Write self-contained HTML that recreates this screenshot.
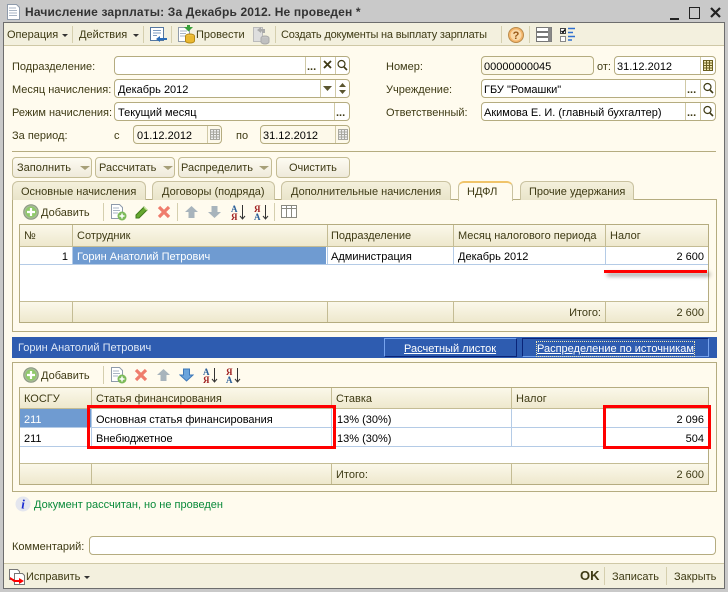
<!DOCTYPE html>
<html><head><meta charset="utf-8">
<style>
html,body{margin:0;padding:0}
body{width:728px;height:592px;position:relative;overflow:hidden;background:#fffbee;font:11px "Liberation Sans",sans-serif;color:#3e3a14}
div,span.t,svg{position:absolute}
.t{white-space:nowrap;line-height:14px;height:14px;margin-top:1px}
.k{color:#000}
.f{background:#fff;border:1px solid #b5ac80;border-radius:4px;box-sizing:border-box;height:19px}
.d{background:#fdf9ea}
.s{width:1px;top:0;bottom:0;background:#d0c9a6}
.b{box-sizing:border-box;height:21px;top:157px;border:1px solid #c4bc94;border-radius:4px;background:linear-gradient(#fdfbf2,#efeada)}
.tab{box-sizing:border-box;height:19px;top:181px;border:1px solid #c9c2a0;border-bottom:0;border-radius:6px 6px 0 0;background:linear-gradient(#f4f0dc,#e9e4ca)}
.p{box-sizing:border-box;left:12px;width:705px;border:1px solid #b5ac80}
.tb{left:19px;width:690px;box-sizing:border-box;border:1px solid #b5ac80;background:#fff}
.h{background:linear-gradient(#fbf8ea,#eee8cd)}
.v{width:1px;background:#c4bc94}
.sep{width:1px;background:#d5cfae}
.dd{width:0;height:0;border-left:3px solid transparent;border-right:3px solid transparent;border-top:3px solid #333}
.dg{width:0;height:0;border-left:5px solid transparent;border-right:5px solid transparent;border-top:4px solid #a69f78}
.r{border:3px solid #f00;box-sizing:border-box}
</style></head><body>
<!-- window frame -->
<div style="left:0;top:0;width:728px;height:22px;background:#c9c9c9"></div>
<div style="left:0;top:22px;width:3px;height:570px;background:#c9c9c9"></div>
<div style="left:725px;top:22px;width:3px;height:570px;background:#c9c9c9"></div>
<div style="left:3px;top:22px;width:1px;height:566px;background:#6d6d6d"></div>
<div style="left:724px;top:22px;width:1px;height:566px;background:#6d6d6d"></div>
<div style="left:0;top:588px;width:728px;height:4px;background:#c9c9c9"></div>
<div style="left:3px;top:588px;width:722px;height:1px;background:#6d6d6d"></div>
<div style="left:3px;top:22px;width:722px;height:1px;background:#6d6d6d"></div>
<svg style="left:6px;top:4px" width="15" height="17"><path d="M1.500 .5h9l3 3v12h-12z" fill="#fff" stroke="#8f9bab"/><path d="M3 4h7M3 6.500h8M3 9h8M3 11.500h8" stroke="#a9b5c4"/></svg>
<span class="t" style="left:25px;top:4px;font-size:12px;font-weight:bold;color:#333;letter-spacing:.15px">Начисление зарплаты: За Декабрь 2012. Не проведен *</span>
<div style="left:670px;top:18px;width:9px;height:2px;background:#222"></div>
<div style="left:689px;top:7px;width:9px;height:10px;border:1px solid #222"></div>
<svg style="left:710px;top:7px" width="11" height="11"><path d="M1 1l9 9M10 1l-9 9" stroke="#222" stroke-width="2.200"/></svg>

<!-- toolbar -->
<div style="left:4px;top:23px;width:720px;height:23px;background:#f3f0de;border-bottom:1px solid #cfc8a6;box-sizing:border-box"></div>
<span class="t" style="left:7px;top:27px">Операция</span><div class="dd" style="left:62px;top:34px"></div>
<div class="sep" style="left:72px;top:26px;height:17px"></div>
<span class="t" style="left:79px;top:27px">Действия</span><div class="dd" style="left:133px;top:34px"></div>
<div class="sep" style="left:143px;top:26px;height:17px"></div>
<svg style="left:149px;top:26px" width="19" height="18"><rect x="1.500" y="1.500" width="13" height="13" fill="#fff" stroke="#5577a0"/><path d="M4 4.500h8M4 7h8M4 9.500h4" stroke="#7f9cc0"/><path d="M7 13l4-3v2h7v2h-7v2z" fill="#2a6cb8"/></svg>
<div class="sep" style="left:171px;top:26px;height:17px"></div>
<svg style="left:177px;top:25px" width="18" height="20"><path d="M1.500 2.500h9l2 2v12h-11z" fill="#fff" stroke="#8f9bab"/><path d="M3 6h7M3 8.500h6M3 11h5" stroke="#a9b5c4"/><path d="M10 0h3v2h3l-4.500 4.500L7 2h3z" fill="#3aa03a"/><ellipse cx="13" cy="11" rx="4.500" ry="2" fill="#f0c040" stroke="#b58a18"/><path d="M8.500 11v5c0 1.200 2 2 4.500 2s4.500-.8 4.500-2v-5" fill="#eab830" stroke="#b58a18"/></svg>
<span class="t" style="left:196px;top:27px">Провести</span>
<svg style="left:252px;top:25px" width="18" height="20"><path d="M1.500 2.500h9v14h-9z" fill="#dedede" stroke="#bbb"/><path d="M5 5l4-3v2h4v4h-3V6.500H9V8z" fill="#aaa"/><ellipse cx="13" cy="13" rx="4" ry="2" fill="#c6c6c6" stroke="#aaa"/><path d="M9 13v4c0 1 2 2 4 2s4-1 4-2v-4" fill="#c0c0c0" stroke="#aaa"/></svg>
<div class="sep" style="left:275px;top:26px;height:17px"></div>
<span class="t" style="left:281px;top:27px;letter-spacing:-.19px">Создать документы на выплату зарплаты</span>
<div class="sep" style="left:501px;top:26px;height:17px"></div>
<svg style="left:507px;top:26px" width="18" height="18"><circle cx="9" cy="9" r="7.500" fill="#f3b469" stroke="#b98a4a"/><circle cx="9" cy="9" r="5.500" fill="#fad9a6"/><text x="9" y="13" text-anchor="middle" font-family="Liberation Sans" font-weight="bold" font-size="11" fill="#9a5a18">?</text></svg>
<div class="sep" style="left:529px;top:26px;height:17px"></div>
<svg style="left:536px;top:26px" width="17" height="17"><g fill="#fff" stroke="#777"><rect x=".5" y="1.500" width="15" height="4"/><rect x=".5" y="6.500" width="15" height="4"/><rect x=".5" y="11.500" width="15" height="4"/></g><path d="M12 1.500h3.500v14H12z" fill="#888"/></svg>
<svg style="left:560px;top:27px" width="16" height="15"><rect x=".5" y="1.500" width="5" height="5" fill="#fff" stroke="#444"/><path d="M1.500 4l1.500 1.500L5 2.500" stroke="#000" fill="none" stroke-width="1.300"/><rect x=".5" y="9.500" width="5" height="5" fill="#fff" stroke="#888"/><path d="M8 1.500h7M8 5.500h5M8 9.500h7M8 13h4" stroke="#2f6fd0" stroke-width="1.600"/></svg>

<!-- form left -->
<span class="t" style="left:12px;top:59px">Подразделение:</span>
<div class="f" style="left:114px;top:56px;width:236px"></div>
<div class="s" style="left:305px;top:57px;height:17px;bottom:auto"></div><div class="s" style="left:320px;top:57px;height:17px;bottom:auto"></div><div class="s" style="left:335px;top:57px;height:17px;bottom:auto"></div>
<span class="t" style="left:307px;top:59px;font-weight:bold;font-size:11px">...</span>
<svg style="left:322px;top:60px" width="11" height="10"><path d="M2 1l7 7M9 1L2 8" stroke="#3e3a14" stroke-width="1.800"/></svg>
<svg style="left:336px;top:59px" width="13" height="13"><circle cx="5.500" cy="5" r="3.500" fill="none" stroke="#3e3a14" stroke-width="1.200"/><path d="M8 8l3 3" stroke="#3e3a14" stroke-width="1.600"/></svg>

<span class="t" style="left:12px;top:82px">Месяц начисления:</span>
<div class="f" style="left:114px;top:79px;width:236px"></div>
<span class="t k" style="left:118px;top:82px">Декабрь 2012</span>
<div class="s" style="left:320px;top:80px;height:17px;bottom:auto"></div><div class="s" style="left:335px;top:80px;height:17px;bottom:auto"></div>
<svg style="left:322px;top:85px" width="11" height="7"><path d="M1 1h9L5.500 6z" fill="#5a5530"/></svg>
<svg style="left:338px;top:82px" width="9" height="13"><path d="M4.500 1L8 5H1zM4.500 12L1 8h7z" fill="#5a5530"/></svg>

<span class="t" style="left:12px;top:105px">Режим начисления:</span>
<div class="f" style="left:114px;top:102px;width:236px"></div>
<span class="t k" style="left:118px;top:105px">Текущий месяц</span>
<div class="s" style="left:334px;top:103px;height:17px;bottom:auto"></div>
<span class="t" style="left:336px;top:105px;font-weight:bold;font-size:11px">...</span>

<span class="t" style="left:12px;top:128px">За период:</span>
<span class="t" style="left:114px;top:128px">с</span>
<div class="f d" style="left:133px;top:125px;width:89px"></div>
<div class="s" style="left:207px;top:126px;height:17px;bottom:auto"></div>
<span class="t k" style="left:137px;top:128px">01.12.2012</span>
<span class="t" style="left:236px;top:128px">по</span>
<div class="f d" style="left:260px;top:125px;width:90px"></div>
<div class="s" style="left:335px;top:126px;height:17px;bottom:auto"></div>
<span class="t k" style="left:263px;top:128px">31.12.2012</span>
<svg style="left:209px;top:128px" width="12" height="13"><path d="M1.500 1.500h9v10h-9zM1.500 4h9M1.500 6.500h9M1.500 9h9M4.500 1.500v10M7.500 1.500v10" fill="#eee" stroke="#a8a8a0"/></svg>
<svg style="left:337px;top:128px" width="12" height="13"><path d="M1.500 1.500h9v10h-9zM1.500 4h9M1.500 6.500h9M1.500 9h9M4.500 1.500v10M7.500 1.500v10" fill="#eee" stroke="#a8a8a0"/></svg>

<!-- form right -->
<span class="t" style="left:386px;top:59px">Номер:</span>
<div class="f d" style="left:481px;top:56px;width:113px"></div>
<span class="t k" style="left:484px;top:59px">00000000045</span>
<span class="t" style="left:597px;top:59px">от:</span>
<div class="f" style="left:614px;top:56px;width:102px"></div>
<span class="t k" style="left:617px;top:59px">31.12.2012</span>
<div class="s" style="left:700px;top:57px;height:17px;bottom:auto"></div>
<svg style="left:702px;top:59px" width="12" height="13"><path d="M1.500 1.500h9v10h-9zM1.500 4h9M1.500 6.500h9M1.500 9h9M4.500 1.500v10M7.500 1.500v10" fill="#f2e8b0" stroke="#6a5f20"/></svg>
<span class="t" style="left:386px;top:82px">Учреждение:</span>
<div class="f" style="left:481px;top:79px;width:235px"></div>
<span class="t k" style="left:484px;top:82px">ГБУ "Ромашки"</span>
<div class="s" style="left:685px;top:80px;height:17px;bottom:auto"></div><div class="s" style="left:700px;top:80px;height:17px;bottom:auto"></div>
<span class="t" style="left:687px;top:82px;font-weight:bold;font-size:11px">...</span>
<svg style="left:702px;top:82px" width="13" height="13"><circle cx="5.500" cy="5" r="3.500" fill="none" stroke="#3e3a14" stroke-width="1.200"/><path d="M8 8l3 3" stroke="#3e3a14" stroke-width="1.600"/></svg>
<span class="t" style="left:386px;top:105px">Ответственный:</span>
<div class="f" style="left:481px;top:102px;width:235px"></div>
<span class="t k" style="left:484px;top:105px">Акимова Е. И. (главный бухгалтер)</span>
<div class="s" style="left:685px;top:103px;height:17px;bottom:auto"></div><div class="s" style="left:700px;top:103px;height:17px;bottom:auto"></div>
<span class="t" style="left:687px;top:105px;font-weight:bold;font-size:11px">...</span>
<svg style="left:702px;top:105px" width="13" height="13"><circle cx="5.500" cy="5" r="3.500" fill="none" stroke="#3e3a14" stroke-width="1.200"/><path d="M8 8l3 3" stroke="#3e3a14" stroke-width="1.600"/></svg>

<div style="left:12px;top:151px;width:704px;height:1px;background:#b5ac80"></div>

<!-- buttons -->
<div class="b" style="left:12px;width:80px"></div><span class="t" style="left:17px;top:160px">Заполнить</span><div class="dg" style="left:80px;top:166px"></div>
<div class="b" style="left:95px;width:80px"></div><span class="t" style="left:99px;top:160px">Рассчитать</span><div class="dg" style="left:163px;top:166px"></div>
<div class="b" style="left:178px;width:94px"></div><span class="t" style="left:181px;top:160px">Распределить</span><div class="dg" style="left:259px;top:166px"></div>
<div class="b" style="left:276px;width:74px"></div><span class="t" style="left:289px;top:160px">Очистить</span>

<!-- upper panel -->
<div class="p" style="top:199px;height:133px"></div>
<div class="tab" style="left:12px;width:134px"></div><span class="t" style="left:21px;top:184px">Основные начисления</span>
<div class="tab" style="left:152px;width:123px"></div><span class="t" style="left:162px;top:184px">Договоры (подряда)</span>
<div class="tab" style="left:281px;width:170px"></div><span class="t" style="left:291px;top:184px">Дополнительные начисления</span>
<div class="tab" style="left:458px;width:55px;height:20px;background:#fffbee;border-top:2px solid #f0c46a"></div><span class="t" style="left:467px;top:184px">НДФЛ</span>
<div class="tab" style="left:520px;width:114px"></div><span class="t" style="left:529px;top:184px">Прочие удержания</span>

<!-- toolbar upper -->
<svg style="left:23px;top:204px" width="16" height="16"><circle cx="8" cy="8" r="7.300" fill="#a8b89a" stroke="#8a9880"/><circle cx="8" cy="8" r="5.500" fill="#8fc96a"/><path d="M8 4v8M4 8h8" stroke="#fff" stroke-width="2.200"/></svg>
<span class="t" style="left:41px;top:205px"><u>Д</u>обавить</span>
<div class="sep" style="left:103px;top:203px;height:18px"></div>
<svg style="left:110px;top:204px" width="17" height="17"><path d="M1.500 .5h8l3 3v11h-11z" fill="#fff" stroke="#8f9bab"/><path d="M3 4h6M3 6.500h7M3 9h5" stroke="#a9b5c4"/><circle cx="12" cy="12" r="4.500" fill="#7dbb5a"/><path d="M12 9.500v5M9.500 12h5" stroke="#fff" stroke-width="1.500"/></svg>
<svg style="left:134px;top:205px" width="15" height="15"><path d="M2 10L10 2l3 3-8 8H2z" fill="#66a830" stroke="#3f7a1a"/><path d="M10 2l3 3" stroke="#c5e29a" stroke-width="1.500"/></svg>
<svg style="left:157px;top:205px" width="14" height="14"><path d="M2 2l10 10M12 2L2 12" stroke="#ef7c6c" stroke-width="3.200"/></svg>
<div class="sep" style="left:177px;top:203px;height:18px"></div>
<svg style="left:184px;top:205px" width="15" height="14"><path d="M7.500 1L14 7h-3.500v6h-6V7H1z" fill="#a8b4bc"/></svg>
<svg style="left:207px;top:205px" width="15" height="14"><path d="M7.500 13L14 7h-3.500V1h-6v6H1z" fill="#a8b4bc"/></svg>
<svg style="left:230px;top:203px" width="17" height="18"><text x="1" y="9" font-family="Liberation Serif" font-weight="bold" font-size="9" fill="#2a5e98">A</text><text x="1" y="17" font-family="Liberation Serif" font-weight="bold" font-size="9" fill="#a02020">Я</text><path d="M12.500 2v13M10 13l2.500 3 2.500-3" stroke="#333" fill="none"/></svg>
<svg style="left:253px;top:203px" width="17" height="18"><text x="1" y="9" font-family="Liberation Serif" font-weight="bold" font-size="9" fill="#a02020">Я</text><text x="1" y="17" font-family="Liberation Serif" font-weight="bold" font-size="9" fill="#2a5e98">A</text><path d="M12.500 2v13M10 13l2.500 3 2.500-3" stroke="#333" fill="none"/></svg>
<div class="sep" style="left:274px;top:203px;height:18px"></div>
<svg style="left:281px;top:205px" width="16" height="13"><path d="M.5 .5h15v12H.5zM.5 3.500h15M5.500 .5v12M10.500 .5v12" fill="#fff" stroke="#8a8a80"/></svg>

<!-- table 1 -->
<div class="tb" style="top:224px;height:99px"></div>
<div class="h" style="left:20px;top:225px;width:688px;height:21px"></div>
<div style="left:20px;top:246px;width:688px;height:1px;background:#c4bc94"></div>
<div style="left:73px;top:247px;width:253px;height:17px;background:#6f9bd1"></div>
<div style="left:20px;top:264px;width:688px;height:1px;background:#b4cbe6"></div>
<div class="h" style="left:20px;top:302px;width:688px;height:20px"></div>
<div style="left:20px;top:301px;width:688px;height:1px;background:#c4bc94"></div>
<div class="v" style="left:72px;top:225px;height:21px"></div><div class="v" style="left:327px;top:225px;height:21px"></div><div class="v" style="left:453px;top:225px;height:21px"></div><div class="v" style="left:605px;top:225px;height:21px"></div>
<div class="v" style="left:72px;top:247px;height:17px;background:#b4cbe6"></div><div class="v" style="left:327px;top:247px;height:17px;background:#b4cbe6"></div><div class="v" style="left:453px;top:247px;height:17px;background:#b4cbe6"></div><div class="v" style="left:605px;top:247px;height:17px;background:#b4cbe6"></div>
<div class="v" style="left:72px;top:302px;height:20px"></div><div class="v" style="left:327px;top:302px;height:20px"></div><div class="v" style="left:453px;top:302px;height:20px"></div><div class="v" style="left:605px;top:302px;height:20px"></div>
<span class="t" style="left:24px;top:228px">№</span>
<span class="t" style="left:77px;top:228px">Сотрудник</span>
<span class="t" style="left:331px;top:228px">Подразделение</span>
<span class="t" style="left:458px;top:228px">Месяц налогового периода</span>
<span class="t" style="left:610px;top:228px">Налог</span>
<span class="t k" style="right:660px;top:249px">1</span>
<span class="t" style="left:77px;top:249px;color:#fff">Горин Анатолий Петрович</span>
<span class="t k" style="left:331px;top:249px">Администрация</span>
<span class="t k" style="left:458px;top:249px">Декабрь 2012</span>
<span class="t k" style="right:24px;top:249px">2 600</span>
<span class="t" style="right:127px;top:305px">Итого:</span>
<span class="t" style="right:24px;top:305px">2 600</span>
<div style="left:604px;top:270px;width:103px;height:3px;background:#f00;box-shadow:3px 3px 4px rgba(0,0,0,.45)"></div>

<!-- blue bar -->
<div style="left:12px;top:337px;width:705px;height:21px;background:#2e5cb0"></div>
<span class="t" style="left:18px;top:340px;color:#dfe8f6">Горин Анатолий Петрович</span>
<div style="left:384px;top:338px;width:133px;height:19px;box-sizing:border-box;border:1px solid;border-color:#77a4ee #0a2478 #0a2478 #77a4ee"></div>
<span class="t" style="left:404px;top:341px;color:#fff;text-decoration:underline">Расчетный листок</span>
<div style="left:522px;top:338px;width:187px;height:19px;box-sizing:border-box;border:1px solid;border-color:#0a2478 #77a4ee #77a4ee #0a2478"></div>
<span class="t" style="left:537px;top:341px;color:#fff;text-decoration:underline;outline:1px dotted #f0e6b0">Распределение по источникам</span>

<!-- lower panel -->
<div class="p" style="top:362px;height:130px"></div>
<svg style="left:23px;top:367px" width="16" height="16"><circle cx="8" cy="8" r="7.300" fill="#a8b89a" stroke="#8a9880"/><circle cx="8" cy="8" r="5.500" fill="#8fc96a"/><path d="M8 4v8M4 8h8" stroke="#fff" stroke-width="2.200"/></svg>
<span class="t" style="left:41px;top:368px"><u>Д</u>обавить</span>
<div class="sep" style="left:103px;top:366px;height:18px"></div>
<svg style="left:110px;top:367px" width="17" height="17"><path d="M1.500 .5h8l3 3v11h-11z" fill="#fff" stroke="#8f9bab"/><path d="M3 4h6M3 6.500h7M3 9h5" stroke="#a9b5c4"/><circle cx="12" cy="12" r="4.500" fill="#7dbb5a"/><path d="M12 9.500v5M9.500 12h5" stroke="#fff" stroke-width="1.500"/></svg>
<svg style="left:134px;top:368px" width="14" height="14"><path d="M2 2l10 10M12 2L2 12" stroke="#ef7c6c" stroke-width="3.200"/></svg>
<svg style="left:156px;top:368px" width="15" height="14"><path d="M7.500 1L14 7h-3.500v6h-6V7H1z" fill="#a8b4bc"/></svg>
<svg style="left:179px;top:368px" width="15" height="14"><path d="M7.500 13L14 7h-3.500V1h-6v6H1z" fill="#6aa4dc" stroke="#3f78b8"/></svg>
<svg style="left:202px;top:366px" width="17" height="18"><text x="1" y="9" font-family="Liberation Serif" font-weight="bold" font-size="9" fill="#2a5e98">A</text><text x="1" y="17" font-family="Liberation Serif" font-weight="bold" font-size="9" fill="#a02020">Я</text><path d="M12.500 2v13M10 13l2.500 3 2.500-3" stroke="#333" fill="none"/></svg>
<svg style="left:225px;top:366px" width="17" height="18"><text x="1" y="9" font-family="Liberation Serif" font-weight="bold" font-size="9" fill="#a02020">Я</text><text x="1" y="17" font-family="Liberation Serif" font-weight="bold" font-size="9" fill="#2a5e98">A</text><path d="M12.500 2v13M10 13l2.500 3 2.500-3" stroke="#333" fill="none"/></svg>

<!-- table 2 -->
<div class="tb" style="top:387px;height:98px"></div>
<div class="h" style="left:20px;top:388px;width:688px;height:20px"></div>
<div style="left:20px;top:408px;width:688px;height:1px;background:#c4bc94"></div>
<div style="left:20px;top:409px;width:71px;height:18px;background:#6f9bd1"></div>
<div style="left:20px;top:427px;width:688px;height:1px;background:#b4cbe6"></div>
<div style="left:20px;top:446px;width:688px;height:1px;background:#b4cbe6"></div>
<div class="h" style="left:20px;top:464px;width:688px;height:20px"></div>
<div style="left:20px;top:463px;width:688px;height:1px;background:#c4bc94"></div>
<div class="v" style="left:91px;top:388px;height:20px"></div><div class="v" style="left:331px;top:388px;height:20px"></div><div class="v" style="left:511px;top:388px;height:20px"></div>
<div class="v" style="left:91px;top:409px;height:37px;background:#b4cbe6"></div><div class="v" style="left:331px;top:409px;height:37px;background:#b4cbe6"></div><div class="v" style="left:511px;top:409px;height:37px;background:#b4cbe6"></div>
<div class="v" style="left:91px;top:464px;height:20px"></div><div class="v" style="left:331px;top:464px;height:20px"></div><div class="v" style="left:511px;top:464px;height:20px"></div>
<span class="t" style="left:24px;top:391px">КОСГУ</span>
<span class="t" style="left:96px;top:391px">Статья финансирования</span>
<span class="t" style="left:336px;top:391px">Ставка</span>
<span class="t" style="left:516px;top:391px">Налог</span>
<span class="t" style="left:24px;top:412px;color:#fff">211</span>
<span class="t k" style="left:96px;top:412px">Основная статья финансирования</span>
<span class="t k" style="left:337px;top:412px">13% (30%)</span>
<span class="t k" style="right:24px;top:412px">2 096</span>
<span class="t k" style="left:24px;top:431px">211</span>
<span class="t k" style="left:96px;top:431px">Внебюджетное</span>
<span class="t k" style="left:337px;top:431px">13% (30%)</span>
<span class="t k" style="right:24px;top:431px">504</span>
<span class="t" style="left:336px;top:467px">Итого:</span>
<span class="t" style="right:24px;top:467px">2 600</span>
<div class="r" style="left:87px;top:405px;width:249px;height:44px"></div>
<div class="r" style="left:603px;top:405px;width:108px;height:44px"></div>

<!-- info -->
<svg style="left:15px;top:496px" width="16" height="16"><circle cx="8" cy="8" r="7.500" fill="#e4e6ee"/><text x="8" y="12.500" text-anchor="middle" font-family="Liberation Serif" font-style="italic" font-weight="bold" font-size="13" fill="#1a2ad0">i</text></svg>
<span class="t" style="left:34px;top:497px;color:#0a8a3a">Документ рассчитан, но не проведен</span>

<span class="t" style="left:12px;top:539px">Комментарий:</span>
<div class="f" style="left:89px;top:536px;width:627px"></div>

<!-- status bar -->
<div style="left:4px;top:563px;width:720px;height:25px;background:#f3f0de;border-top:1px solid #cfc8a6;box-sizing:border-box"></div>
<svg style="left:8px;top:568px" width="17" height="17"><path d="M1.500 1.500h8l2 2v8h-10z" fill="#fff" stroke="#777"/><path d="M6.500 5.500h8l2 2v9h-10z" fill="#fff" stroke="#777"/><path d="M2 9l5 3h4v-2l5 3-5 3v-2H6L2 11z" fill="#f00"/></svg>
<span class="t" style="left:26px;top:569px">Исправить</span><div class="dd" style="left:84px;top:576px"></div>
<span class="t" style="left:580px;top:568px;font-weight:bold;font-size:13px">OK</span>
<div class="sep" style="left:604px;top:567px;height:18px"></div>
<span class="t" style="left:612px;top:569px">Записать</span>
<div class="sep" style="left:666px;top:567px;height:18px"></div>
<span class="t" style="left:674px;top:569px">Закрыть</span>
</body></html>
